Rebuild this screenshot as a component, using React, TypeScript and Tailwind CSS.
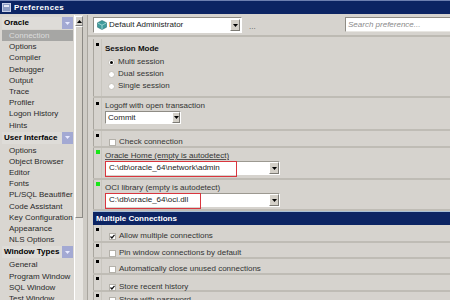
import React from 'react';

// Preferences dialog (PL/SQL Developer style), classic Windows look

const oracleItems = ['Connection', 'Options', 'Compiler', 'Debugger', 'Output', 'Trace', 'Profiler', 'Logon History', 'Hints'];
const uiItems = ['Options', 'Object Browser', 'Editor', 'Fonts', 'PL/SQL Beautifier', 'Code Assistant', 'Key Configuration', 'Appearance', 'NLS Options'];
const windowItems = ['General', 'Program Window', 'SQL Window', 'Test Window'];

const DownArrow = ({ className = '' }: { className?: string }) => (
  <svg width="5" height="3" viewBox="0 0 5 3" className={className}>
    <path d="M0 0h5L2.5 3z" fill="currentColor" />
  </svg>
);

const GroupHeader = ({ label }: { label: string }) => (
  <div className="flex h-[12px] my-[1px] ml-[2px] w-[71px]">
    <div className="flex-1 min-w-0 overflow-hidden whitespace-nowrap bg-[#dedcd8] font-bold text-[8px] leading-[12px] pl-[2px] text-black">
      {label}
    </div>
    <div className="w-[11px] shrink-0 bg-[#a3a9d3] flex items-center justify-center text-[#e8eaff]">
      <DownArrow />
    </div>
  </div>
);

const Item = ({ label, selected }: { label: string; selected?: boolean }) => (
  <div
    className={
      'h-[11.2px] leading-[11.2px] ml-[2px] w-[71px] pl-[7px] whitespace-nowrap ' +
      (selected ? 'bg-[#a6a6a4] text-[#dcdcdc]' : 'text-[#2a2a2a]')
    }
  >
    {label}
  </div>
);

const Marker = ({ green, top = 4 }: { green?: boolean; top?: number }) => (
  <div className="w-[9px] shrink-0 border-l border-[#a9a69f] border-r border-r-[#c9c6bf] pl-[2px]">
    {green ? (
      <div className="w-[4px] h-[4px] bg-[#19e619] mt-[2px]" />
    ) : (
      <div className="w-[3px] h-[3px] bg-black" style={{ marginTop: top }} />
    )}
  </div>
);

const Radio = ({ checked, label }: { checked?: boolean; label: string }) => (
  <div className="flex items-center h-[12px] pl-[3px]">
    <div className="w-[7px] h-[7px] rounded-full bg-white border border-[#c4c1ba] flex items-center justify-center">
      {checked && <div className="w-[3px] h-[3px] rounded-full bg-black" />}
    </div>
    <span className="ml-[3px] text-[#333]">{label}</span>
  </div>
);

const Check = ({ checked, label }: { checked?: boolean; label: string }) => (
  <div className="flex items-center pl-[4px]">
    <div className="w-[7px] h-[7px] bg-white border border-[#b4b1aa] flex items-center justify-center">
      {checked && (
        <svg width="5" height="5" viewBox="0 0 5 5">
          <path d="M0.5 2.5l1.4 1.5L4.5 0.8" stroke="#111" strokeWidth="1.2" fill="none" />
        </svg>
      )}
    </div>
    <span className="ml-[3px] text-[#333] whitespace-nowrap">{label}</span>
  </div>
);

const PathInput = ({ value, redWidth }: { value: string; redWidth: string }) => (
  <div className="relative flex w-[175px] h-[14px] bg-white border border-t-[#9c9991] border-l-[#9c9991] border-b-white border-r-white">
    <div className="flex-1 leading-[12px] pl-[3px] text-[#222] whitespace-nowrap">{value}</div>
    <div className="w-[10px] bg-[#d4d0c8] border border-t-white border-l-white border-b-[#7c7a74] border-r-[#7c7a74] flex items-center justify-center text-black">
      <DownArrow />
    </div>
    <div className={'absolute -left-[1px] -top-[1px] h-[16px] border border-[#d9363e] ' + redWidth} />
  </div>
);

const Section = ({ h, children, green, markerTop }: { h: string; children?: React.ReactNode; green?: boolean; markerTop?: number }) => (
  <div className={'flex border-b-2 border-[#bfbcb5] ' + h}>
    <Marker green={green} top={markerTop} />
    <div className="flex-1 pl-[3px]">{children}</div>
  </div>
);

export default function App() {
  return (
    <div className="w-[450px] h-[300px] overflow-hidden bg-[#d6d3ce] text-[8px] font-['Liberation_Sans',Arial,sans-serif] flex flex-col">
      {/* Title bar */}
      <div className="h-[14px] shrink-0 bg-[#0c2463] border-t border-[#6d7fb0] flex items-center pl-[2px]">
        <svg width="9" height="9" viewBox="0 0 9 9" className="mr-[3px]">
          <rect x="0.5" y="0.5" width="8" height="8" fill="#8c9cc4" stroke="#c8d0e8" />
          <rect x="2" y="2" width="5" height="2" fill="#e4e8f4" />
        </svg>
        <span className="text-white font-bold text-[8px] tracking-[0.4px]">Preferences</span>
      </div>

      <div className="flex flex-1 min-h-0">
        {/* Left tree */}
        <div className="w-[88px] shrink-0 flex pt-[1px]">
          <div className="w-[74px] bg-[#d9d6d1] pt-[1px]">
            <GroupHeader label="Oracle" />
            {oracleItems.map((t, i) => (
              <Item key={t} label={t} selected={i === 0} />
            ))}
            <GroupHeader label="User Interface" />
            {uiItems.map((t) => (
              <Item key={t} label={t} />
            ))}
            <GroupHeader label="Window Types" />
            {windowItems.map((t) => (
              <Item key={t} label={t} />
            ))}
          </div>
          {/* scrollbar */}
          <div className="w-[9px] flex flex-col bg-[#e6e4e0] border-l border-white">
            <div className="h-[10px] mt-[1px] bg-[#d4d0c8] border border-t-white border-l-white border-b-[#808080] border-r-[#808080] flex items-center justify-center text-black">
              <DownArrow className="rotate-180" />
            </div>
            <div className="h-[192px] bg-[#d4d0c8] border border-t-white border-l-white border-b-[#8c8a85] border-r-[#8c8a85]" />
          </div>
          <div className="w-[5px] bg-[#cfccc6] border-r border-[#a9a69f]" />
        </div>

        {/* Right panel */}
        <div className="flex-1 flex flex-col min-w-0">
          {/* toolbar */}
          <div className="h-[23px] shrink-0 flex items-start pt-[3px] pl-[5px] border-b-2 border-[#bdbab3]">
            <div className="w-[149px] h-[16px] bg-white border border-t-[#8f8c85] border-l-[#8f8c85] border-b-white border-r-white flex items-center">
              <svg width="10" height="10" viewBox="0 0 10 10" className="ml-[3px]">
                <path d="M5 0.5L9.5 2.8v4.4L5 9.5 0.5 7.2V2.8z" fill="#3f9b9c" stroke="#2c6f72" strokeWidth="0.6" />
                <path d="M0.8 3L5 5.2 9.2 3M5 5.2v4" stroke="#bfe6e4" strokeWidth="0.7" fill="none" />
              </svg>
              <span className="ml-[2px] flex-1 text-[#222] whitespace-nowrap">Default Administrator</span>
              <div className="w-[10px] h-[12px] mr-[1px] bg-[#d4d0c8] border border-t-white border-l-white border-b-[#7c7a74] border-r-[#7c7a74] flex items-center justify-center text-black">
                <DownArrow />
              </div>
            </div>
            <span className="ml-[7px] mt-[6px] text-[#555] leading-[8px]">...</span>
            <div className="ml-auto w-[105px] h-[15px] bg-white border border-t-[#8f8c85] border-l-[#8f8c85] border-b-[#e8e6e2] border-r-0 pl-[2px] leading-[13px] italic text-[#8a8a8a] whitespace-nowrap">
              Search preference...
            </div>
          </div>

          {/* settings */}
          <div className="flex-1 ml-[5px] pt-[2px] min-h-0 overflow-hidden">
            <Section h="h-[59px]">
              <div className="pt-[5px] font-bold text-[#111] leading-[10px]">Session Mode</div>
              <div className="mt-[2px]">
                <Radio checked label="Multi session" />
                <Radio label="Dual session" />
                <Radio label="Single session" />
              </div>
            </Section>
            <Section h="h-[33px]">
              <div className="pt-[3px] leading-[10px] text-[#333]">Logoff with open transaction</div>
              <div className="flex w-[76px] h-[13px] bg-white border border-t-[#8f8c85] border-l-[#8f8c85] border-b-white border-r-white">
                <span className="flex-1 pl-[2px] leading-[11px] text-[#222]">Commit</span>
                <div className="w-[8px] bg-[#d4d0c8] border border-t-white border-l-white border-b-[#7c7a74] border-r-[#7c7a74] flex items-center justify-center text-black">
                  <DownArrow />
                </div>
              </div>
            </Section>
            <Section h="h-[17px]" markerTop={3}>
              <div className="pt-[5px]">
                <Check label="Check connection" />
              </div>
            </Section>
            <Section h="h-[32px]" green>
              <div className="pt-[3px] leading-[10px] text-[#333] underline decoration-[#555]">Oracle Home (empty is autodetect)</div>
              <PathInput value="C:\db\oracle_64\network\admin" redWidth="w-[132px]" />
            </Section>
            <Section h="h-[31px]" green>
              <div className="pt-[3px] leading-[10px] text-[#333]">OCI library (empty is autodetect)</div>
              <PathInput value="C:\db\oracle_64\oci.dll" redWidth="w-[96px]" />
            </Section>
            <div className="h-[14px] flex items-center -ml-[1px] bg-[#0c2463] border-t border-[#a9c0d8] text-white font-bold text-[8px] pl-[4px]">
              Multiple Connections
            </div>
            <Section h="h-[18px]" markerTop={3}>
              <div className="pt-[5px]">
                <Check checked label="Allow multiple connections" />
              </div>
            </Section>
            <Section h="h-[16px]" markerTop={1}>
              <div className="pt-[4px]">
                <Check label="Pin window connections by default" />
              </div>
            </Section>
            <Section h="h-[16px]" markerTop={1}>
              <div className="pt-[4px]">
                <Check label="Automatically close unused connections" />
              </div>
            </Section>
            <Section h="h-[17px]" markerTop={2}>
              <div className="pt-[6px]">
                <Check checked label="Store recent history" />
              </div>
            </Section>
            <Section h="h-[17px]" markerTop={2}>
              <div className="pt-[2px]">
                <Check label="Store with password" />
              </div>
            </Section>
          </div>
        </div>
      </div>
    </div>
  );
}
